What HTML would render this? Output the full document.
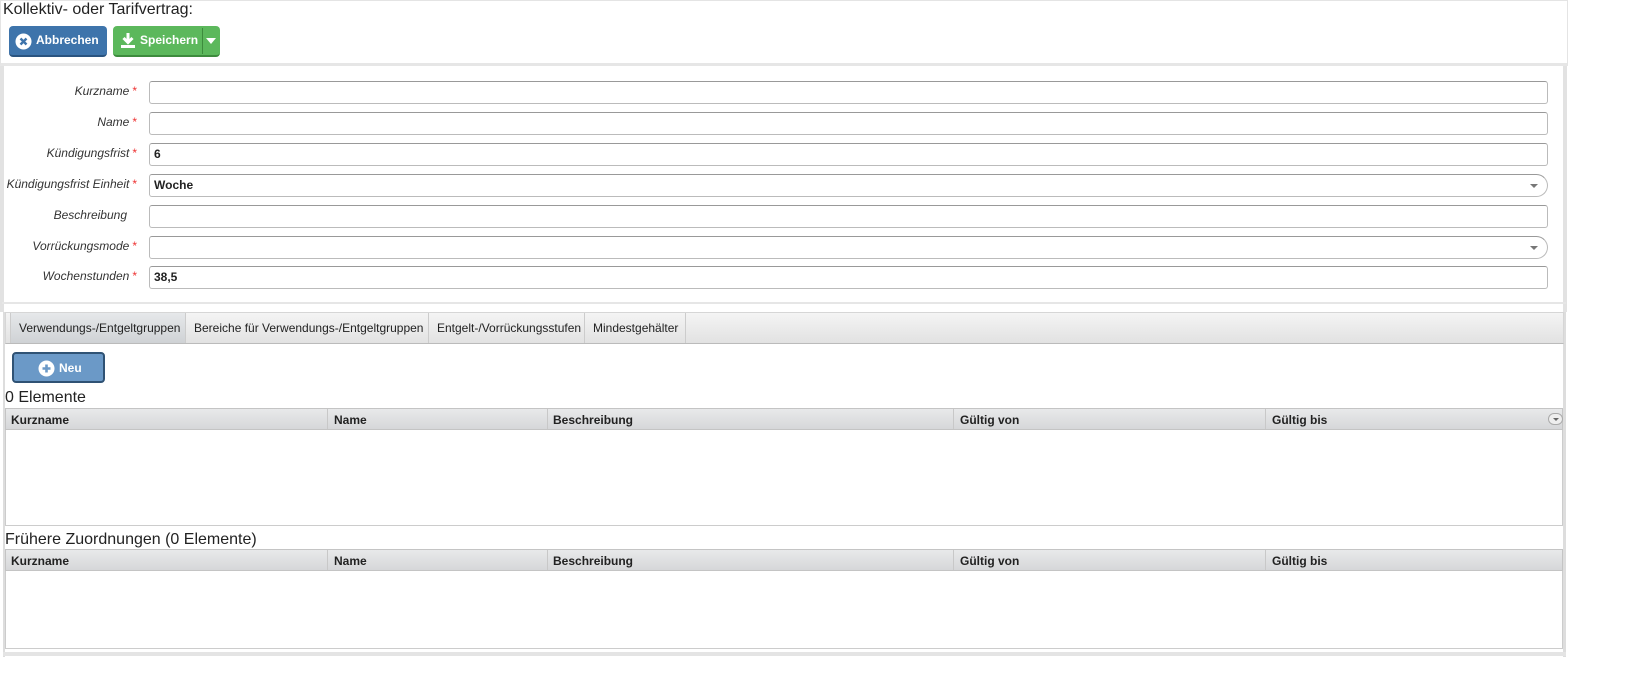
<!DOCTYPE html>
<html><head><meta charset="utf-8"><style>
*{box-sizing:border-box;margin:0;padding:0}
html,body{width:1630px;height:687px}
body{background:#fff;font-family:"Liberation Sans",Arial,sans-serif;color:#222;position:relative;overflow:hidden}
.a{position:absolute}
.title{left:3px;top:1px;font-size:16px;color:#222}
.btn{position:absolute;top:26px;height:31px;border-radius:4px;color:#fff;font-weight:bold;font-size:12px;line-height:29px}
.inp{position:absolute;left:149px;width:1399px;height:23px;border:1px solid #bbb;border-top-color:#999;border-radius:3px;background:#fff;font-size:12px;font-weight:bold;padding-left:4px;line-height:21px}
.sel{border-radius:3px 12px 12px 3px}
.sel:after{content:"";position:absolute;right:9px;top:9px;border-left:4px solid transparent;border-right:4px solid transparent;border-top:4px solid #777}
.lbl{position:absolute;right:1493px;font-size:12px;font-style:italic;color:#333;text-align:right;white-space:nowrap}
.lbl b{color:#e33;font-weight:normal;font-style:normal;margin-left:3px}
.tab{position:absolute;top:313px;height:30px;border-right:1px solid #ccc;font-size:12px;color:#222;line-height:30px;padding:0 8px;white-space:nowrap}
.gh{position:absolute;left:5px;width:1558px;height:22px;background:linear-gradient(#e8e9ea,#d6d7d9);border:1px solid #c4c4c4;font-size:12px;font-weight:bold;color:#222}
.gh span{position:absolute;top:4px}
.gh i{position:absolute;top:0;width:1px;height:20px;background:#c8c8c8}
.gb{position:absolute;left:5px;width:1558px;border:1px solid #ccc;border-top:none;background:#fff}
</style></head><body>
<div class="a" style="left:0;top:0;width:1568px;height:66px;border:1px solid #e4e4e4;border-bottom:3px solid #e6e6e6"></div>
<div class="a title">Kollektiv- oder Tarifvertrag:</div>
<div class="btn" style="left:9px;width:98px;background:#3e74ab;border-bottom:2px solid #2a5480">
<svg class="a" style="left:6px;top:7px" width="17" height="17" viewBox="0 0 17 17"><circle cx="8.5" cy="8.5" r="8" fill="#fff"/><path d="M5.5 5.5l6 6M11.5 5.5l-6 6" stroke="#3e74ab" stroke-width="2.4"/></svg>
<span class="a" style="left:27px;top:0">Abbrechen</span></div>
<div class="btn" style="left:113px;width:107px;background:#5cb85c;border-bottom:2px solid #3d8b3d">
<svg class="a" style="left:7px;top:6px" width="16" height="17" viewBox="0 0 16 17"><path d="M8 1v9M3.5 6l4.5 4.5 4.5-4.5" stroke="#fff" stroke-width="3" fill="none"/><rect x="1" y="13" width="14" height="3" fill="#fff"/></svg>
<span class="a" style="left:27px;top:0">Speichern</span>
<div class="a" style="left:89px;top:2px;width:1px;height:26px;background:#3d8b3d"></div>
<div class="a" style="left:93px;top:12px;border-left:5px solid transparent;border-right:5px solid transparent;border-top:6px solid #fff"></div></div>
<div class="a" style="left:0;top:66px;width:4px;height:246px;background:#e2e2e2"></div>
<div class="a" style="left:1563px;top:66px;width:4px;height:246px;background:#e2e2e2"></div>
<div class="a" style="left:2px;top:302px;width:1564px;height:2px;background:#e6e6e6"></div>

<div class="lbl" style="top:84px">Kurzname<b>*</b></div><div class="inp" style="top:81px"></div>
<div class="lbl" style="top:115px">Name<b>*</b></div><div class="inp" style="top:112px"></div>
<div class="lbl" style="top:146px">Kündigungsfrist<b>*</b></div><div class="inp" style="top:143px">6</div>
<div class="lbl" style="top:177px">Kündigungsfrist Einheit<b>*</b></div><div class="inp sel" style="top:174px">Woche</div>
<div class="lbl" style="top:208px">Beschreibung<span style="display:inline-block;width:10px"></span></div><div class="inp" style="top:205px"></div>
<div class="lbl" style="top:239px">Vorrückungsmode<b>*</b></div><div class="inp sel" style="top:236px"></div>
<div class="lbl" style="top:269px">Wochenstunden<b>*</b></div><div class="inp" style="top:266px">38,5</div>

<div class="a" style="left:3px;top:312px;width:2px;height:345px;background:#ddd"></div>
<div class="a" style="left:1563px;top:312px;width:3px;height:345px;background:#ddd"></div>
<div class="a" style="left:5px;top:312px;width:1559px;height:32px;background:linear-gradient(#f4f4f4,#e2e2e2);border:1px solid #d6d6d6;border-bottom:1px solid #bbb"></div>
<div class="tab" style="left:10px;width:176px;background:linear-gradient(#e6e8ea,#cfd2d5);border-left:1px solid #ccc">Verwendungs-/Entgeltgruppen</div>
<div class="tab" style="left:186px;width:243px">Bereiche für Verwendungs-/Entgeltgruppen</div>
<div class="tab" style="left:429px;width:156px">Entgelt-/Vorrückungsstufen</div>
<div class="tab" style="left:585px;width:101px">Mindestgehälter</div>

<div class="a" style="left:12px;top:352px;width:93px;height:31px;background:#6b99c7;border:2px solid #2f5274;border-radius:4px;color:#fff;font-weight:bold;font-size:12px">
<svg class="a" style="left:24px;top:6px" width="17" height="17" viewBox="0 0 17 17"><circle cx="8.5" cy="8.5" r="8" fill="#fff"/><path d="M8.5 4.5v8M4.5 8.5h8" stroke="#6b99c7" stroke-width="2.6"/></svg>
<span class="a" style="left:45px;top:7px">Neu</span></div>
<div class="a" style="left:5px;top:389px;font-size:16px">0 Elemente</div>
<div class="gh" style="top:408px"><span style="left:5px">Kurzname</span><i style="left:321px"></i><span style="left:328px">Name</span><i style="left:541px"></i><span style="left:547px">Beschreibung</span><i style="left:947px"></i><span style="left:954px">Gültig von</span><i style="left:1259px"></i><span style="left:1266px">Gültig bis</span>
<div class="a" style="left:1542px;top:4px;width:15px;height:12px;border:1px solid #aaa;border-radius:7px;background:#eee"></div><div class="a" style="left:1547px;top:9px;border-left:3px solid transparent;border-right:3px solid transparent;border-top:3px solid #666"></div></div>
<div class="gb" style="top:430px;height:96px"></div>
<div class="a" style="left:5px;top:531px;font-size:16px">Frühere Zuordnungen (0 Elemente)</div>
<div class="gh" style="top:549px"><span style="left:5px">Kurzname</span><i style="left:321px"></i><span style="left:328px">Name</span><i style="left:541px"></i><span style="left:547px">Beschreibung</span><i style="left:947px"></i><span style="left:954px">Gültig von</span><i style="left:1259px"></i><span style="left:1266px">Gültig bis</span></div>
<div class="gb" style="top:571px;height:78px"></div>
<div class="a" style="left:3px;top:652px;width:1563px;height:4px;background:#e4e4e4"></div>
</body></html>
